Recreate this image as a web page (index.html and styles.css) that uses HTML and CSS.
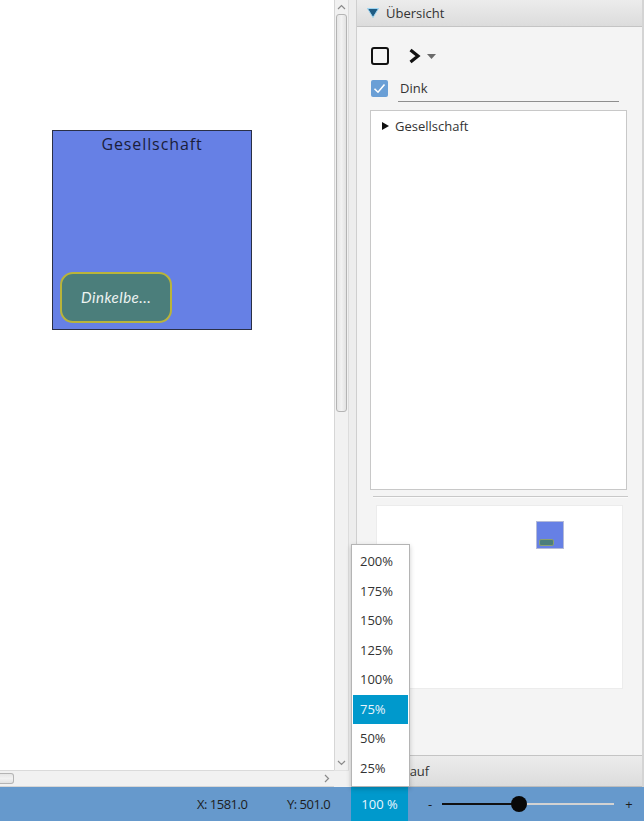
FILE: index.html
```html
<!DOCTYPE html>
<html>
<head>
<meta charset="utf-8">
<link rel="stylesheet" href="styles.css">
</head>
<body>
<div class="app">
  <div class="main">
    <div class="editor">
      <div class="canvas">
        <div class="node">
          <div class="node-title">Gesellschaft</div>
          <div class="note">Dinkelbe...</div>
        </div>
      </div>
      <div class="vscroll">
        <svg class="sarrow" width="9" height="6" viewBox="0 0 9 6"><path d="M1 5 L4.5 1.5 L8 5" fill="none" stroke="#8a8a8a" stroke-width="1.2"/></svg>
        <div class="vthumb"></div>
        <div class="vspace"></div>
        <svg class="sarrow" width="9" height="6" viewBox="0 0 9 6"><path d="M1 1 L4.5 4.5 L8 1" fill="none" stroke="#8a8a8a" stroke-width="1.2"/></svg>
      </div>
      <div class="hscroll">
        <div class="hthumb"></div>
        <div class="hspace"></div>
        <svg class="sarrow" width="6" height="9" viewBox="0 0 6 9"><path d="M1 1 L4.5 4.5 L1 8" fill="none" stroke="#8a8a8a" stroke-width="1.2"/></svg>
      </div>
      <div class="corner"></div>
    </div>
    <div class="splitter"></div>
    <div class="side">
      <div class="tp-header">
        <svg class="tp-arrow" width="14" height="12" viewBox="0 0 14 12"><path d="M1.5 1.5 H12.5 L7 10.5 Z" fill="#1f5c84" stroke="#9fd6f2" stroke-width="1"/></svg>
        <span>Übersicht</span>
      </div>
      <div class="tp-body">
        <div class="toolbar">
          <svg class="ico-square" width="18" height="18" viewBox="0 0 18 18"><rect x="1" y="1" width="16" height="16" rx="2" fill="none" stroke="#111" stroke-width="2"/></svg>
          <svg class="ico-chev" width="13" height="16" viewBox="0 0 13 16"><path d="M2.5 2 L10 8 L2.5 14" fill="none" stroke="#111" stroke-width="3.2"/></svg>
          <svg class="ico-drop" width="9" height="5" viewBox="0 0 9 5"><path d="M0 0 H9 L4.5 5 Z" fill="#6a6a6a"/></svg>
        </div>
        <div class="filter">
          <div class="check"><svg width="17" height="17" viewBox="0 0 17 17"><path d="M3.5 8.8 L7 12.2 L13.5 4.6" fill="none" stroke="#fff" stroke-width="1.6"/></svg></div>
          <div class="field">Dink</div>
        </div>
        <div class="tree">
          <div class="tree-row">
            <svg width="7" height="8" viewBox="0 0 7 8"><path d="M0 0 L7 4 L0 8 Z" fill="#111"/></svg>
            <span>Gesellschaft</span>
          </div>
        </div>
        <div class="sep"></div>
        <div class="minimap">
          <div class="mini-node"><div class="mini-note"></div></div>
        </div>
      </div>
      <div class="tp-header bottom">
        <svg class="tp-arrow" width="14" height="12" viewBox="0 0 14 12"><path d="M3 1 L11 6 L3 11 Z" fill="#333"/></svg>
        <span>Verlauf</span>
      </div>
    </div>
  </div>
  <div class="status">
    <span class="coord x">X: 1581.0</span>
    <span class="coord y">Y: 501.0</span>
    <span class="zoombox">100 %</span>
    <span class="pm minus">-</span>
    <div class="slider">
      <div class="track-fill"></div>
      <div class="track-rest"></div>
      <div class="knob"></div>
    </div>
    <span class="pm plus">+</span>
  </div>
  <div class="popup">
    <div class="item">200%</div>
    <div class="item">175%</div>
    <div class="item">150%</div>
    <div class="item">125%</div>
    <div class="item">100%</div>
    <div class="item sel">75%</div>
    <div class="item">50%</div>
    <div class="item">25%</div>
  </div>
</div>
</body>
</html>
```

FILE: styles.css
```css
* { box-sizing: border-box; }
html, body { margin: 0; padding: 0; }
body {
  width: 644px;
  height: 821px;
  overflow: hidden;
  font-family: "Open Sans", "Noto Sans", sans-serif;
  font-size: 13px;
  color: #333;
  background: #fff;
}
.app {
  position: relative;
  display: flex;
  flex-direction: column;
  width: 644px;
  height: 821px;
}
.main {
  display: flex;
  height: 787px;
}
.editor {
  width: 349px;
  display: grid;
  grid-template-columns: 334px 15px;
  grid-template-rows: 770px 17px;
}
.canvas {
  position: relative;
  background: #fff;
  overflow: hidden;
}
.node {
  position: absolute;
  left: 52px;
  top: 130px;
  width: 200px;
  height: 200px;
  background: #6680e5;
  border: 1px solid #2a2f45;
}
.node-title {
  text-align: center;
  font-family: "Open Sans", sans-serif;
  font-size: 16px;
  letter-spacing: 0.9px;
  color: #1a1d3a;
  margin-top: 2px;
  line-height: 22px;
}
.note {
  position: absolute;
  left: 7px;
  top: 141px;
  width: 112px;
  height: 51px;
  border: 2px solid #b9b43a;
  border-radius: 13px;
  background: #4b7e7b;
  color: #eef4f2;
  font-family: "Lato", sans-serif;
  font-style: italic;
  font-size: 15px;
  letter-spacing: 0.5px;
  padding-left: 19px;
  line-height: 47px;
}
.vscroll {
  background: #f1f1f1;
  border-left: 1px solid #d6d6d6;
  border-right: 1px solid #dcdcdc;
  display: flex;
  flex-direction: column;
  align-items: center;
  padding: 4px 0 4px 0;
}
.vthumb {
  width: 11px;
  height: 398px;
  margin-top: 4px;
  border: 1px solid #b4b4b4;
  border-radius: 3px;
  background: linear-gradient(to right, #e6e6e6, #f2f2f2 50%, #e2e2e2);
}
.vspace { flex: 1; }
.hscroll {
  background: #f1f1f1;
  border-top: 1px solid #dadada;
  border-bottom: 1px solid #d6d6d6;
  display: flex;
  align-items: center;
  padding-right: 4px;
}
.hthumb {
  width: 14px;
  height: 11px;
  border: 1px solid #b4b4b4;
  border-left: none;
  border-radius: 0 3px 3px 0;
  background: linear-gradient(#e6e6e6, #f2f2f2 50%, #e2e2e2);
}
.hspace { flex: 1; }
.corner { background: #f1f1f1; border-top: 1px solid #e2e2e2; }
.sarrow { display: block; }
.splitter {
  width: 8px;
  background: #ededed;
  border-right: 1px solid #cfcfcf;
}
.side {
  width: 287px;
  display: flex;
  flex-direction: column;
  border-right: 2px solid #d4d4d4;
}
.tp-header {
  height: 27px;
  display: flex;
  align-items: center;
  padding-left: 9px;
  background: linear-gradient(#ececec, #dcdcdc);
  border-bottom: 1px solid #c4c4c4;
  color: #333;
  font-size: 13px;
}
.tp-header.bottom {
  height: 32px;
  border-top: 1px solid #c4c4c4;
  border-bottom: 1px solid #bdbdbd;
}
.tp-arrow { margin-right: 6px; }
.tp-body {
  flex: 1;
  background: #f4f4f4;
  padding: 0 13px;
}
.toolbar {
  display: flex;
  align-items: center;
  height: 18px;
  margin-top: 20px;
  padding-left: 1px;
}
.ico-chev { margin-left: 19px; }
.ico-drop { margin-left: 6px; margin-top: 1px; }
.filter {
  display: flex;
  align-items: center;
  margin-top: 14px;
  height: 19px;
  padding-left: 1px;
}
.check {
  width: 17px;
  height: 17px;
  background: #6a9fd6;
  border-radius: 2px;
}
.check svg { display: block; }
.field {
  margin-left: 10px;
  width: 221px;
  height: 22px;
  border-bottom: 1.5px solid #8e8e8e;
  padding-left: 2px;
  line-height: 17px;
  color: #333;
  margin-top: 4px;
}
.tree {
  margin-top: 12px;
  width: 257px;
  height: 380px;
  background: #fff;
  border: 1px solid #c8c8c8;
}
.tree-row {
  display: flex;
  align-items: center;
  height: 26px;
  padding-left: 11px;
  padding-top: 3px;
}
.tree-row svg { margin-right: 6px; }
.sep {
  margin: 6px 1px 0 3px;
  height: 2px;
  border-top: 1px solid #c8c8c8;
  border-bottom: 1px solid #fbfbfb;
}
.minimap {
  position: relative;
  margin: 7px 0 0 6px;
  width: 247px;
  height: 184px;
  background: #fff;
  border: 1px solid #ececec;
}
.mini-node {
  position: absolute;
  left: 159px;
  top: 15px;
  width: 28px;
  height: 28px;
  background: #6680e5;
  border: 1px solid #b4bad8;
}
.mini-note {
  position: absolute;
  left: 2px;
  top: 17px;
  width: 15px;
  height: 7px;
  border-radius: 2px;
  background: #4b7e7b;
  border: 1px solid #8aa070;
}
.status {
  height: 34px;
  background: #6699cc;
  display: flex;
  align-items: center;
  color: #1d1d1d;
  font-size: 13px;
}
.coord { letter-spacing: -0.5px; }
.coord.x { margin-left: 197px; width: 90px; }
.coord.y { width: 64px; }
.zoombox {
  width: 57px;
  height: 34px;
  background: #0099cc;
  color: #eaf6ff;
  line-height: 34px;
  text-align: center;
}
.pm { width: 10px; text-align: center; }
.pm.minus { margin-left: 17px; }
.slider {
  position: relative;
  width: 172px;
  height: 18px;
  margin-left: 7px;
  display: flex;
  align-items: center;
}
.track-fill { width: 77px; height: 2px; background: #111; }
.track-rest { flex: 1; height: 2px; background: #d2d2d2; }
.knob {
  position: absolute;
  left: 69px;
  top: 1px;
  width: 16px;
  height: 16px;
  border-radius: 50%;
  background: #080808;
}
.pm.plus { margin-left: 10px; }
.popup {
  position: absolute;
  left: 351px;
  top: 544px;
  width: 59px;
  height: 243px;
  background: #fff;
  border: 1px solid #b4b4b4;
  padding: 2px 1px;
  box-shadow: 0 2px 5px rgba(0,0,0,0.2);
}
.item {
  height: 29.5px;
  line-height: 29.5px;
  padding-left: 7px;
  color: #333;
  font-size: 13px;
}
.item.sel {
  background: #0099cc;
  color: #e8f4fc;
}
```
